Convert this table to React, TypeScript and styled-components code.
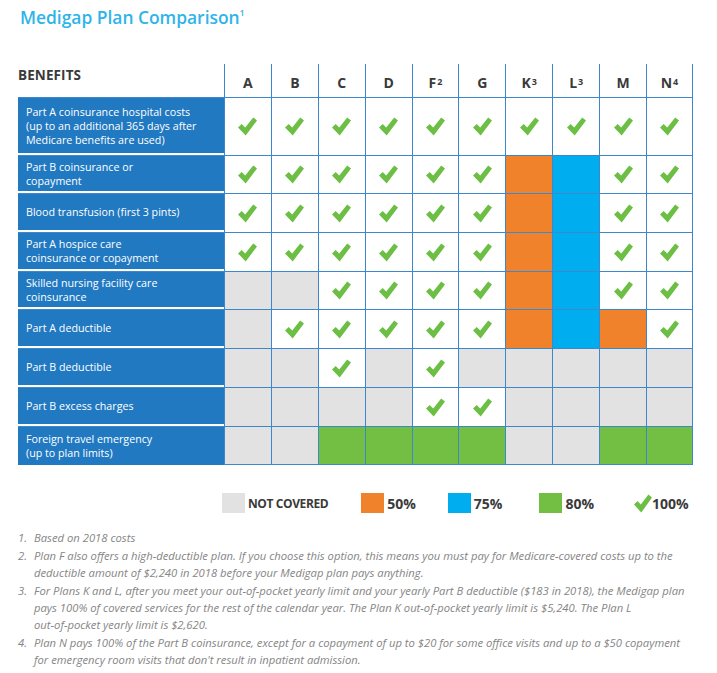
import React from "react";
import styled, { createGlobalStyle } from "styled-components";

const Global = createGlobalStyle`
  html, body { margin: 0; padding: 0; background: #fff; }
  body { font-family: "Open Sans", "Noto Sans", Arial, sans-serif; }
`;

const Page = styled.div`
  width: 717px;
  height: 673px;
  padding: 5px 0 0 18px;
  box-sizing: border-box;
  overflow: hidden;
`;

const Title = styled.h1`
  margin: 0 0 0 2px;
  font-size: 17.4px;
  font-weight: 600;
  line-height: 24px;
  color: #2fb4e9;
  sup { font-size: 9px; vertical-align: 8px; line-height: 0; }
`;

const Table = styled.div`
  margin-top: 35px;
  display: grid;
  grid-template-columns: 206px repeat(10, 46.9px);
  grid-template-rows: 33px 58px 38px 39px 39px 38px 39px 39px 39px 39px;
  width: 675px;
`;

const BenefitsHead = styled.div`
  font-size: 13.5px;
  font-weight: 700;
  color: #3a3a3a;
  letter-spacing: 0.1px;
  padding-top: 2px;
`;

const PlanHead = styled.div<{ $last?: boolean }>`
  border-left: 1px solid #3d88cc;
  ${(p) => (p.$last ? "border-right: 1px solid #3d88cc;" : "")}
  display: flex;
  align-items: center;
  justify-content: center;
  padding-top: 3px;
  font-size: 14px;
  font-weight: 700;
  color: #3a3a3a;
  sup { font-size: 9px; vertical-align: 6px; line-height: 0; margin-left: 1px; }
`;

const Benefit = styled.div<{ $last?: boolean }>`
  background: #2179c2;
  color: #fff;
  font-size: 10.7px;
  line-height: 14px;
  display: flex;
  align-items: center;
  padding: 0 8px;
  border-top: 1px solid #3d88cc;
  margin-right: -1px;
  box-shadow: inset 0 ${(p) => (p.$last ? "0" : "-2px")} 0 #fff;
  padding-bottom: ${(p) => (p.$last ? "0" : "2px")};
`;

const fills: Record<string, string> = {
  y: "#ffffff",
  n: "#e2e2e2",
  o: "#f1822c",
  b: "#00aeef",
  g: "#72bf44",
};

const Cell = styled.div<{ $fill: string; $lastCol?: boolean; $lastRow?: boolean }>`
  background: ${(p) => fills[p.$fill]};
  border-left: 1px solid #3d88cc;
  border-top: 1px solid #3d88cc;
  ${(p) => (p.$lastCol ? "border-right: 1px solid #3d88cc;" : "")}
  ${(p) => (p.$lastRow ? "border-bottom: 1px solid #3d88cc;" : "")}
  display: flex;
  align-items: center;
  justify-content: center;
`;

const Check = ({ w = 19, h = 19 }: { w?: number; h?: number }) => (
  <svg width={w} height={h} viewBox="0 0 20 19" preserveAspectRatio="none">
    <path
      d="M0 10.4 L3.9 7 L7.6 10.6 L16 0.4 L20 3.4 L8.1 18.6 Z"
      fill="#6cbf44"
    />
  </svg>
);

const Legend = styled.div`
  display: flex;
  align-items: center;
  margin: 28px 0 0 204px;
  height: 20px;
`;

const LegendItem = styled.div<{ $gap: number }>`
  display: flex;
  align-items: center;
  margin-right: ${(p) => p.$gap}px;
  font-size: 14px;
  font-weight: 700;
  color: #3a3a3a;
`;

const Swatch = styled.span<{ $fill: string }>`
  width: 23px;
  height: 20px;
  background: ${(p) => fills[p.$fill]};
  margin-right: 3px;
`;

const SmallLabel = styled.span`
  font-size: 12px;
  letter-spacing: -0.4px;
`;

const Notes = styled.div`
  margin-top: 16px;
  font-style: italic;
  font-size: 11.25px;
  line-height: 17px;
  color: #858585;
`;

const Note = styled.div`
  display: flex;
  margin-bottom: 1px;
`;

const Num = styled.span`
  width: 16px;
  flex: none;
`;

const plans = ["A", "B", "C", "D", "F", "G", "K", "L", "M", "N"];
const sups: Record<string, string> = { F: "2", K: "3", L: "3", N: "4" };

const rows: { label: React.ReactNode; cells: string }[] = [
  { label: <>Part A coinsurance hospital costs<br />(up to an additional 365 days after<br />Medicare benefits are used)</>, cells: "cccccccccc" },
  { label: <>Part B coinsurance or<br />copayment</>, cells: "ccccccobcc" },
  { label: <>Blood transfusion (first 3 pints)</>, cells: "ccccccobcc" },
  { label: <>Part A hospice care<br />coinsurance or copayment</>, cells: "ccccccobcc" },
  { label: <>Skilled nursing facility care<br />coinsurance</>, cells: "nnccccobcc" },
  { label: <>Part A deductible</>, cells: "ncccccoboc" },
  { label: <>Part B deductible</>, cells: "nncncnnnnn" },
  { label: <>Part B excess charges</>, cells: "nnnnccnnnn" },
  { label: <>Foreign travel emergency<br />(up to plan limits)</>, cells: "nnggggnngg" },
];

export default function App() {
  return (
    <Page>
      <Global />
      <Title>
        Medigap Plan Comparison<sup>1</sup>
      </Title>
      <Table>
        <BenefitsHead>BENEFITS</BenefitsHead>
        {plans.map((p, i) => (
          <PlanHead key={p} $last={i === plans.length - 1}>
            {p}
            {sups[p] && <sup>{sups[p]}</sup>}
          </PlanHead>
        ))}
        {rows.map((r, ri) => (
          <React.Fragment key={ri}>
            <Benefit $last={ri === rows.length - 1}>
              <span>{r.label}</span>
            </Benefit>
            {r.cells.split("").map((c, ci) => (
              <Cell
                key={ci}
                $fill={c === "c" ? "y" : c}
                $lastCol={ci === 9}
                $lastRow={ri === rows.length - 1}
              >
                {c === "c" && <Check />}
              </Cell>
            ))}
          </React.Fragment>
        ))}
      </Table>
      <Legend>
        <LegendItem $gap={33}>
          <Swatch $fill="n" />
          <SmallLabel>NOT COVERED</SmallLabel>
        </LegendItem>
        <LegendItem $gap={32}>
          <Swatch $fill="o" />
          50%
        </LegendItem>
        <LegendItem $gap={37}>
          <Swatch $fill="b" />
          75%
        </LegendItem>
        <LegendItem $gap={40}>
          <Swatch $fill="g" />
          80%
        </LegendItem>
        <LegendItem $gap={0}>
          <Check w={18} h={19} />
          100%
        </LegendItem>
      </Legend>
      <Notes>
        <Note>
          <Num>1.</Num>
          <span>Based on 2018 costs</span>
        </Note>
        <Note>
          <Num>2.</Num>
          <span>
            Plan F also offers a high-deductible plan. If you choose this option, this means you must pay for Medicare-covered costs up to the
            <br />
            deductible amount of $2,240 in 2018 before your Medigap plan pays anything.
          </span>
        </Note>
        <Note>
          <Num>3.</Num>
          <span>
            For Plans K and L, after you meet your out-of-pocket yearly limit and your yearly Part B deductible ($183 in 2018), the Medigap plan
            <br />
            pays 100% of covered services for the rest of the calendar year. The Plan K out-of-pocket yearly limit is $5,240. The Plan L
            <br />
            out-of-pocket yearly limit is $2,620.
          </span>
        </Note>
        <Note>
          <Num>4.</Num>
          <span>
            Plan N pays 100% of the Part B coinsurance, except for a copayment of up to $20 for some office visits and up to a $50 copayment
            <br />
            for emergency room visits that don't result in inpatient admission.
          </span>
        </Note>
      </Notes>
    </Page>
  );
}
